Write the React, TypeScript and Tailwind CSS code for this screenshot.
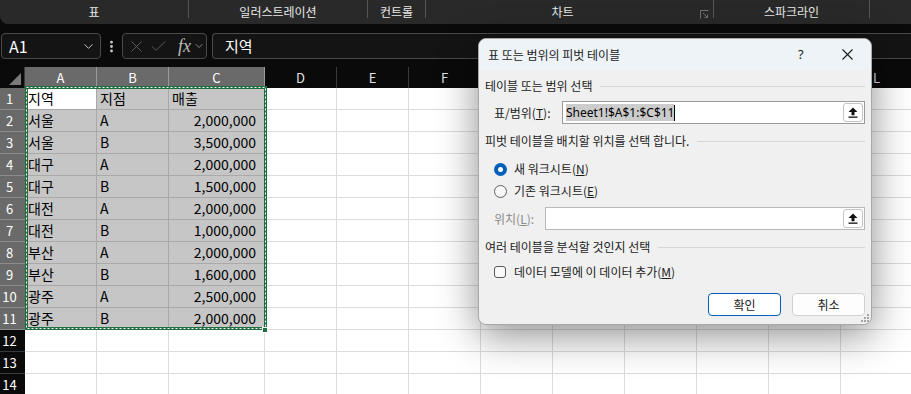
import React from 'react';
import { ChevronDown, X, Check, EllipsisVertical } from 'lucide-react';

const COLS = ['A', 'B', 'C', 'D', 'E', 'F', 'G', 'H', 'I', 'J', 'K', 'L'];
const COL_W = [
  'w-[72px]', 'w-[72px]', 'w-[96px]', 'w-[72px]', 'w-[72px]', 'w-[72px]',
  'w-[72px]', 'w-[72px]', 'w-[72px]', 'w-[72px]', 'w-[72px]', 'w-[72px]',
];
// G..K sit under the dialog, their letters never show
const HIDDEN_LABELS = ['G', 'H', 'I', 'J', 'K'];

const DATA: string[][] = [
  ['지역', '지점', '매출'],
  ['서울', 'A', '2,000,000'],
  ['서울', 'B', '3,500,000'],
  ['대구', 'A', '2,000,000'],
  ['대구', 'B', '1,500,000'],
  ['대전', 'A', '2,000,000'],
  ['대전', 'B', '1,000,000'],
  ['부산', 'A', '2,000,000'],
  ['부산', 'B', '1,600,000'],
  ['광주', 'A', '2,500,000'],
  ['광주', 'B', '2,000,000'],
];

const ROWS = Array.from({ length: 14 }, (_, i) => i + 1);

// Ribbon group labels along the top
const Ribbon = () => {
  return (
    <div className="flex h-[24px] items-start rounded-bl-[8px] bg-[#292929] text-[12px] text-[#e8e8e8]">
      <div className="flex h-full w-[188px] items-center justify-center">표</div>
      <div className="h-[18px] w-px bg-[#555]" />
      <div className="flex h-full w-[178px] items-center justify-center">일러스트레이션</div>
      <div className="h-[18px] w-px bg-[#555]" />
      <div className="flex h-full w-[57px] items-center justify-center">컨트롤</div>
      <div className="h-[18px] w-px bg-[#555]" />
      <div className="relative flex h-full w-[287px] items-center justify-center pr-[14px]">
        차트
        <svg className="absolute right-[4px] top-[10px]" width="9" height="9" viewBox="0 0 9 9">
          <path d="M0.5 8.5V0.5H8.5" fill="none" stroke="#6f6f6f" />
          <path d="M3 3L7.5 7.5M4.5 7.5H7.5V4.5" fill="none" stroke="#6f6f6f" />
        </svg>
      </div>
      <div className="h-[18px] w-px bg-[#555]" />
      <div className="flex h-full w-[155px] items-center justify-center">스파크라인</div>
      <div className="h-[18px] w-px bg-[#555]" />
    </div>
  );
};

const FormulaBar = () => {
  return (
    <div className="mt-[9px] mb-[8px] flex h-[26px] items-stretch">
      <div className="ml-[1px] flex w-[100px] shrink-0 items-center justify-between rounded-[4px] border border-[#4a4a4a] bg-[#141414] pl-[7px] pr-[4px] text-[16px] text-white">
        <span>A1</span>
        <ChevronDown size={15} strokeWidth={1.5} className="text-[#cfcfcf]" />
      </div>
      <div className="flex w-[21px] shrink-0 items-center justify-center text-[#cfcfcf]">
        <EllipsisVertical size={15} strokeWidth={2.5} />
      </div>
      <div className="flex w-[85px] shrink-0 items-center rounded-[4px] border border-[#4a4a4a] bg-[#141414] pl-[4px]">
        <X size={19} strokeWidth={1.2} className="text-[#5f5f5f]" />
        <Check size={19} strokeWidth={1.2} className="ml-[3px] text-[#5f5f5f]" />
        <span className="ml-[10px] font-['Liberation_Serif',serif] text-[18px] italic leading-none text-[#bdbdbd]">fx</span>
        <ChevronDown size={12} strokeWidth={1.5} className="ml-[2px] text-[#a8a8a8]" />
      </div>
      <div className="ml-[5px] flex flex-1 items-center rounded-l-[4px] border border-r-0 border-[#4a4a4a] bg-[#141414] pl-[12px] text-[15px] text-white">
        지역
      </div>
    </div>
  );
};

const HeaderRow = () => {
  return (
    <div className="flex h-[21px]">
      <div className="relative w-[25px] shrink-0 border-r border-[#3a3a3a] bg-[#0a0a0a]">
        <svg className="absolute bottom-[3px] right-[3px]" width="12" height="12" viewBox="0 0 12 12">
          <path d="M12 0V12H0Z" fill="#7a7a7a" />
        </svg>
      </div>
      {COLS.map((c, i) => {
        const sel = i < 3;
        return (
          <div
            key={c}
            className={`${COL_W[i]} flex shrink-0 items-center justify-center border-r text-[13px] ${
              sel ? 'border-[#9a9a9a] bg-[#6a6a6a] text-white' : 'border-[#3a3a3a] bg-[#0a0a0a] text-[#e2e2e2]'
            }`}
          >
            {HIDDEN_LABELS.includes(c) ? '' : c}
          </div>
        );
      })}
    </div>
  );
};

const SheetRow = ({ row }: { row: number }) => {
  const selRow = row <= 11;
  return (
    <div className="flex h-[22px]">
      <div
        className={`flex w-[25px] shrink-0 items-center justify-center border-b pr-[6px] text-[13px] text-white ${
          selRow ? 'border-[#8c8c8c] bg-[#6a6a6a]' : 'border-[#3a3a3a] bg-[#0a0a0a]'
        }`}
      >
        {row}
      </div>
      {COLS.map((c, i) => {
        const inRange = selRow && i < 3;
        const active = row === 1 && i === 0;
        const value = inRange ? DATA[row - 1][i] : '';
        const numeric = i === 2 && row > 1;
        return (
          <div
            key={c}
            className={`${COL_W[i]} flex shrink-0 items-center border-b border-r text-[14px] text-black ${
              numeric ? 'justify-end pr-[8px]' : 'pl-[3px]'
            } ${
              active
                ? 'border-[#a9a9a9] bg-white'
                : inRange
                  ? 'border-[#a9a9a9] bg-[#c6c6c6]'
                  : 'border-[#dcdcdc] bg-white'
            }`}
          >
            {value}
          </div>
        );
      })}
    </div>
  );
};

const Sheet = () => {
  return (
    <div className="relative">
      <HeaderRow />
      {ROWS.map((r) => (
        <SheetRow key={r} row={r} />
      ))}
      {/* marching ants around A1:C11 */}
      <svg className="absolute left-[24px] top-[19px]" width="244" height="245" viewBox="0 0 244 245">
        <rect x="2.5" y="1.5" width="239" height="241" fill="none" stroke="#1e6e40" strokeWidth="3" />
        <rect x="2.5" y="1.5" width="239" height="241" fill="none" stroke="#ffffff" strokeWidth="1" strokeDasharray="2 2" />
      </svg>
      <div className="absolute left-[262px] top-[260px] h-[6px] w-[6px] border border-white bg-[#1e6e40]" />
    </div>
  );
};

const UpButton = () => (
  <div className="my-[1px] mr-[1px] flex w-[20px] items-center justify-center rounded-[3px] border border-[#c4c4c4] bg-white">
    <svg width="10" height="11" viewBox="0 0 10 11">
      <path d="M5 0.5L9.5 5H6.5V8.3H3.5V5H0.5Z" fill="#111" />
      <rect x="0.5" y="9.5" width="9" height="1.3" fill="#111" />
    </svg>
  </div>
);

const SectionTitle = ({ children, className }: { children: React.ReactNode; className: string }) => (
  <div className={`flex h-[16px] items-center gap-[8px] pr-[6px] ${className}`}>
    <span className="whitespace-nowrap">{children}</span>
    <div className="h-px flex-1 bg-[#d6d6d6]" />
  </div>
);

const PivotDialog = () => {
  return (
    <div className="absolute left-[478px] top-[38px] flex h-[287px] w-[394px] flex-col overflow-hidden rounded-[8px] border border-[#a8a8a8] bg-[#f0f0f0] text-[12px] text-[#1b1b1b] shadow-[0_10px_40px_rgba(0,0,0,0.45)]">
      <div className="flex h-[31px] shrink-0 items-center bg-[#eef3f8] pl-[9px]">
        <span className="flex-1">표 또는 범위의 피벗 테이블</span>
        <span className="w-[44px] font-['Noto_Sans',sans-serif] text-[13px]">?</span>
        <svg className="mr-[18px]" width="11" height="11" viewBox="0 0 11 11">
          <path d="M0.5 0.5L10.5 10.5M10.5 0.5L0.5 10.5" stroke="#1b1b1b" strokeWidth="1.1" />
        </svg>
      </div>
      <div className="flex flex-1 flex-col pl-[6px]">
        <SectionTitle className="mt-[8px]">테이블 또는 범위 선택</SectionTitle>
        <div className="mt-[7px] flex h-[23px] items-stretch pr-[6px]">
          <div className="flex w-[77px] items-center pl-[9px]">
            표/범위(<u>T</u>):
          </div>
          <div className="flex flex-1 items-stretch border border-[#9a9a9a] bg-white">
            <div className="flex flex-1 items-center pl-[3px]">
              <span className="bg-[#cccccc] font-['Noto_Sans',sans-serif] text-[12px] leading-[17px] text-black">
                Sheet1!$A$1:$C$11
              </span>
              <span className="h-[16px] w-px bg-black" />
            </div>
            <UpButton />
          </div>
        </div>
        <SectionTitle className="mt-[9px]">피벗 테이블을 배치할 위치를 선택 합니다.</SectionTitle>
        <div className="mt-[11px] flex h-[18px] items-center pl-[9px]">
          <div className="flex h-[13px] w-[13px] items-center justify-center rounded-full bg-[#005fb8]">
            <div className="h-[5px] w-[5px] rounded-full bg-white" />
          </div>
          <span className="ml-[7px]">
            새 워크시트(<u>N</u>)
          </span>
        </div>
        <div className="mt-[4px] flex h-[18px] items-center pl-[9px]">
          <div className="h-[13px] w-[13px] rounded-full border border-[#606060] bg-[#f7f7f7]" />
          <span className="ml-[7px]">
            기존 워크시트(<u>E</u>)
          </span>
        </div>
        <div className="mt-[7px] flex h-[23px] items-stretch pr-[6px]">
          <div className="flex w-[60px] items-center pl-[9px] text-[#8a8a8a]">
            위치(<u>L</u>):
          </div>
          <div className="flex flex-1 items-stretch border border-[#b8b8b8] bg-white">
            <div className="flex-1" />
            <UpButton />
          </div>
        </div>
        <SectionTitle className="mt-[9px]">여러 테이블을 분석할 것인지 선택</SectionTitle>
        <div className="mt-[8px] flex h-[18px] items-center pl-[9px]">
          <div className="h-[12px] w-[12px] rounded-[3px] border border-[#5a5a5a] bg-[#f9f9f9]" />
          <span className="ml-[8px]">
            데이터 모델에 이 데이터 추가(<u>M</u>)
          </span>
        </div>
        <div className="mt-[12px] flex h-[23px] justify-end gap-[11px] pr-[6px]">
          <button className="w-[73px] rounded-[4px] border border-[#005fb8] bg-white text-[12px]">확인</button>
          <button className="w-[73px] rounded-[4px] border border-[#d0d0d0] bg-[#fdfdfd] text-[12px]">취소</button>
        </div>
      </div>
      <svg className="absolute bottom-[2px] right-[2px]" width="8" height="8" viewBox="0 0 8 8">
        <rect x="6" y="0" width="2" height="2" fill="#a5a5a5" />
        <rect x="3" y="3" width="2" height="2" fill="#a5a5a5" />
        <rect x="6" y="3" width="2" height="2" fill="#a5a5a5" />
        <rect x="0" y="6" width="2" height="2" fill="#a5a5a5" />
        <rect x="3" y="6" width="2" height="2" fill="#a5a5a5" />
        <rect x="6" y="6" width="2" height="2" fill="#a5a5a5" />
      </svg>
    </div>
  );
};

export default function App() {
  return (
    <div className="relative h-[394px] w-[911px] overflow-hidden bg-[#0a0a0a] font-['Noto_Sans_CJK_KR',sans-serif]">
      <Ribbon />
      <FormulaBar />
      <Sheet />
      <PivotDialog />
    </div>
  );
}
